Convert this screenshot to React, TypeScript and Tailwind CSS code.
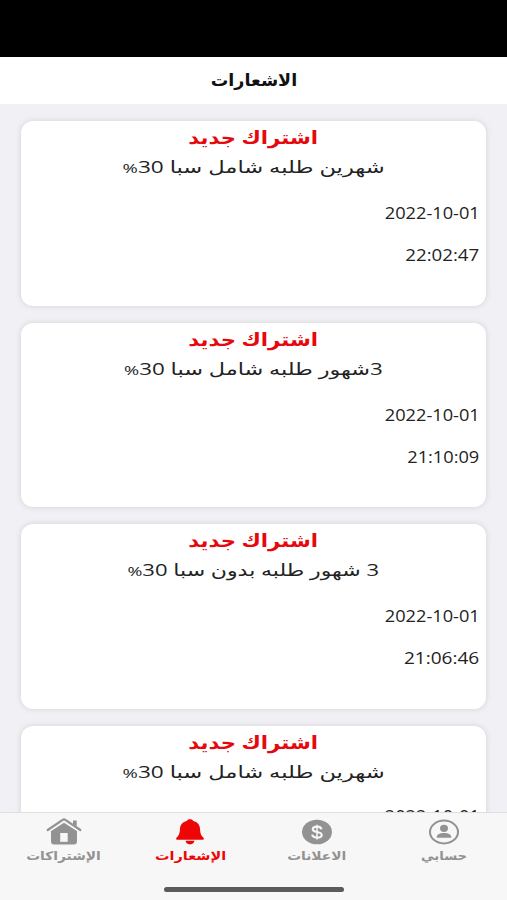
const notices = [
  { body: 'شهرين طلبه شامل سبا 30', bodyScale: 'scale-x-[1.37]', date: '2022-10-01', time: '22:02:47', timeScale: 'scale-x-[1.1]', dateGap: 'mt-[17px]' },
  { body: '3شهور طلبه شامل سبا 30', bodyScale: 'scale-x-[1.355]', date: '2022-10-01', time: '21:10:09', timeScale: 'scale-x-[1.07]', dateGap: 'mt-[17px]' },
  { body: '3 شهور طلبه بدون سبا 30', bodyScale: 'scale-x-[1.335]', date: '2022-10-01', time: '21:06:46', timeScale: 'scale-x-[1.12]', dateGap: 'mt-[17px]' },
  { body: 'شهرين طلبه شامل سبا 30', bodyScale: 'scale-x-[1.37]', date: '2022-10-01', time: '', timeScale: '', dateGap: 'mt-[15px]' },
];

function HomeIcon() {
  return (
    <svg viewBox="0 0 36 28" className="ml-[2px] h-7 w-9" fill="#929292">
      <path d="M18 4.800 31 13v11q0 2.400-2.500 2.400h-21Q5 26.400 5 24V13Z" />
      <path d="M2 12.200 16.600 2.300q1.400-1 2.800 0L34 12.200" fill="none" stroke="#f7f7f7" strokeWidth="4.500" />
      <path d="M27 2.600h3.700v6L27 6Z" />
      <path d="M1.700 12 16.700 1.900q1.300-.9 2.600 0L34.300 12" fill="none" stroke="#929292" strokeWidth="2.200" strokeLinecap="round" />
      <path d="M14.200 15h7.500v8.800h-7.500Z" fill="#f7f7f7" />
    </svg>
  );
}

function BellIcon() {
  return (
    <svg viewBox="0 0 28 28" className="h-7 w-7" fill="#ee0505">
      <path d="M14 1.300c1.600 0 2.700.7 3.300 1.600 4 1 6.500 3.800 6.700 7.700.2 4.700.9 6.800 3.300 9 1 1 .6 2.200-.8 2.200H1.500c-1.400 0-1.800-1.200-.8-2.200 2.400-2.200 3.100-4.300 3.300-9 .2-3.900 2.700-6.700 6.700-7.700.6-.9 1.700-1.600 3.300-1.600Z" />
      <path d="M9.500 22.800h9c-.5 2.300-2.100 3.600-4.500 3.600s-4-1.300-4.500-3.600Z" />
    </svg>
  );
}

function DollarIcon() {
  return (
    <svg viewBox="0 0 32 28" className="h-7 w-8">
      <ellipse cx="16" cy="14" rx="15" ry="12.300" fill="#929292" />
      <path d="M20.500 11.200c-.4-1.700-2-2.600-4.500-2.600-2.600 0-4.200 1-4.200 2.600 0 3.900 8.900 1.700 8.900 5.700 0 1.700-1.900 2.700-4.700 2.700s-4.500-1-4.800-2.900" fill="none" stroke="#f7f7f7" strokeWidth="2.200" />
      <path d="M16 6.800v14.600" stroke="#f7f7f7" strokeWidth="1.500" />
    </svg>
  );
}

function ProfileIcon() {
  return (
    <svg viewBox="0 0 32 28" className="h-7 w-8" fill="#929292">
      <ellipse cx="16" cy="14" rx="14" ry="11.400" fill="none" stroke="#929292" strokeWidth="2" />
      <ellipse cx="16" cy="10.300" rx="4" ry="3.600" />
      <path d="M8.700 19.200c.3-2.900 3.400-4.100 7.300-4.100s7 1.200 7.300 4.100q0 .5-.6.500H9.300q-.6 0-.6-.5Z" />
    </svg>
  );
}

const tabs = [
  { label: 'الإشتراكات', Icon: HomeIcon, style: 'text-[#929292]', scale: 'scale-x-[1.15]' },
  { label: 'الإشعارات', Icon: BellIcon, style: 'text-[#ee0505]', scale: 'scale-x-[1.2]' },
  { label: 'الاعلانات', Icon: DollarIcon, style: 'text-[#929292]', scale: 'scale-x-[1.15]' },
  { label: 'حسابي', Icon: ProfileIcon, style: 'text-[#929292]', scale: 'scale-x-[1.1]' },
];

export default function App() {
  return (
    <div className='flex h-[900px] w-[507px] flex-col overflow-hidden bg-[#f1f0f5] font-["Open_Sans","DejaVu_Sans",sans-serif]'>
      <div className="h-[57px] shrink-0 bg-black" />
      <header className="flex h-[47px] shrink-0 items-center justify-center bg-white pb-[2px]">
        <h1 dir="rtl" className="scale-x-[1.03] text-[17px] font-bold leading-6 text-[#111]">الاشعارات</h1>
      </header>

      <main className="flex min-h-0 flex-1 flex-col gap-[17px] overflow-hidden px-[21px] pt-[17px]">
        {notices.map((n, i) => (
          <article key={i} className="flex h-[184.600px] shrink-0 flex-col rounded-[12px] bg-white shadow-[0_0_6px_rgba(0,0,0,0.13)]">
            <h2 dir="rtl" className="mt-[2px] scale-x-[1.175] self-center text-[18px] font-bold leading-7 text-[#e5080c]">اشتراك جديد</h2>
            <p dir="rtl" className={`mt-[2px] self-center whitespace-nowrap text-[16.500px] leading-7 text-[#222] ${n.bodyScale}`}>
              {n.body}<span className="text-[13.500px]">%</span>
            </p>
            <p className={`mr-[6px] origin-right scale-x-[1.07] self-end text-[17px] leading-7 text-[#222] ${n.dateGap}`}>{n.date}</p>
            {n.time && (
              <p className={`mt-[14px] mr-[7px] origin-right self-end text-[17px] leading-7 text-[#222] ${n.timeScale}`}>{n.time}</p>
            )}
          </article>
        ))}
      </main>

      <footer className="flex h-[88px] shrink-0 flex-col border-t border-[#dedede] bg-[#f7f7f7]">
        <nav className="grid grid-cols-4 pt-[5px]">
          {tabs.map(({ label, Icon, style, scale }) => (
            <div key={label} className={`flex flex-col items-center ${style}`}>
              <Icon />
              <span dir="rtl" className={`mt-[2px] text-[12px] font-bold leading-4 ${scale}`}>{label}</span>
            </div>
          ))}
        </nav>
        <div className="mt-auto mb-[8px] h-[5px] w-[180px] self-center rounded-full bg-[#5b5b5b]" />
      </footer>
    </div>
  );
}
